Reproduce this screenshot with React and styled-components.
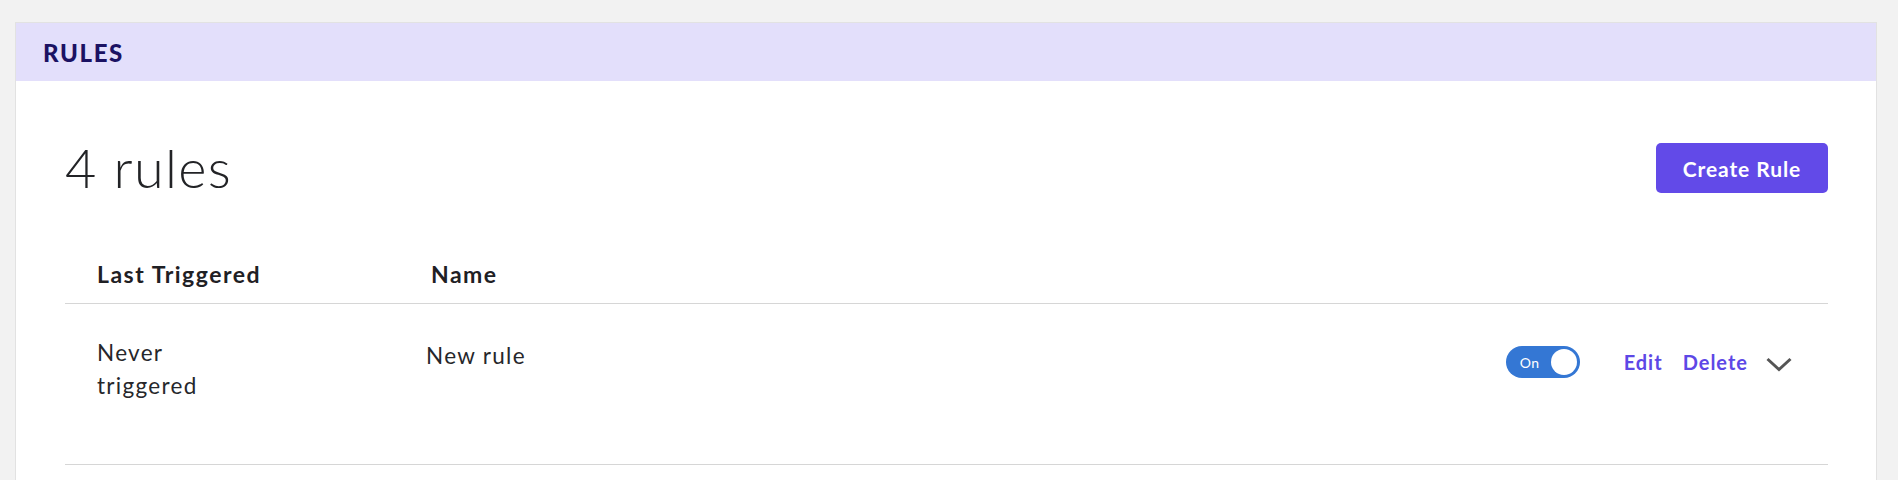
import React from 'react';
import styled, { createGlobalStyle } from 'styled-components';

const font = `'Lato', 'Open Sans', sans-serif`;

const GlobalStyle = createGlobalStyle`
  html, body {
    margin: 0;
    padding: 0;
    background: #f2f2f2;
    font-family: ${font};
    color: #222326;
  }
`;

const Page = styled.div`
  padding: 22px 21px 0 15px;
`;

const Card = styled.section`
  background: #fff;
  border: 1px solid #e2e2e2;
  border-bottom: none;
  min-height: 470px;
`;

const CardHeader = styled.header`
  height: 58px;
  display: flex;
  align-items: center;
  padding-left: 27px;
  background: #e3dffb;
`;

const CardTitle = styled.h2`
  margin: 0;
  font-size: 24px;
  font-weight: 900;
  letter-spacing: 1.6px;
  color: #1b1263;
`;

const CardBody = styled.div`
  padding: 0 48px 0 49px;
`;

const TitleRow = styled.div`
  margin-top: 62px;
  height: 50px;
  display: flex;
  align-items: center;
  justify-content: space-between;
`;

const Count = styled.h1`
  margin: 0;
  font-size: 54px;
  font-weight: 300;
  letter-spacing: 1.3px;
  line-height: 1;
  color: #222326;
`;

const PrimaryButton = styled.button`
  height: 50px;
  width: 172px;
  border: none;
  border-radius: 5px;
  background: #624ae8;
  color: #fff;
  font-family: ${font};
  font-size: 21px;
  font-weight: 700;
  letter-spacing: 0.9px;
  cursor: pointer;
`;

const Row = styled.div`
  display: grid;
  grid-template-columns: 334px 1fr auto;
  align-items: start;
  padding: ${p => (p.head ? '65px 36px 13px 32px' : '32px 36px 62px 32px')};
  border-bottom: 1px solid #d6d6d6;
`;

const HeadCell = styled.div`
  font-size: 23px;
  line-height: 32px;
  font-weight: 700;
  letter-spacing: 1.5px;
  color: #1f2024;
`;

const Cell = styled.div`
  font-size: 22.5px;
  line-height: 33px;
  letter-spacing: 1.3px;
  color: #26272b;
  margin: ${p => (p.offset ? '3px 0 0 -5px' : '0')};
  width: ${p => (p.narrow ? '120px' : 'auto')};
`;

const Actions = styled.div`
  display: flex;
  align-items: center;
  height: 32px;
  margin-top: 10px;
`;

const Toggle = styled.button`
  position: relative;
  width: 74px;
  height: 32px;
  border: none;
  border-radius: 16px;
  background: #3477d4;
  padding: 0 0 0 14px;
  display: flex;
  align-items: center;
  color: #fff;
  font-family: ${font};
  font-size: 14px;
  letter-spacing: 0.5px;
  cursor: pointer;
  margin-right: 44px;

  &::after {
    content: '';
    position: absolute;
    right: 3px;
    top: 3px;
    width: 26px;
    height: 26px;
    border-radius: 50%;
    background: #fff;
  }
`;

const TextLink = styled.a`
  font-size: 20px;
  font-weight: 700;
  letter-spacing: 1px;
  color: #5d48e6;
  text-decoration: none;
  margin-right: ${p => p.gap || 20}px;
  cursor: pointer;
`;

const Chevron = styled.svg`
  display: block;
  margin-top: 4px;
`;

export default function App() {
  return (
    <>
      <GlobalStyle />
      <Page>
        <Card>
          <CardHeader>
            <CardTitle>RULES</CardTitle>
          </CardHeader>
          <CardBody>
            <TitleRow>
              <Count>4 rules</Count>
              <PrimaryButton>Create Rule</PrimaryButton>
            </TitleRow>

            <Row head>
              <HeadCell>Last Triggered</HeadCell>
              <HeadCell>Name</HeadCell>
              <div />
            </Row>

            <Row>
              <Cell narrow>Never triggered</Cell>
              <Cell offset>New rule</Cell>
              <Actions>
                <Toggle>On</Toggle>
                <TextLink gap={20}>Edit</TextLink>
                <TextLink gap={18}>Delete</TextLink>
                <Chevron width="26" height="15" viewBox="0 0 26 15">
                  <polyline
                    points="1.5,2 13,12.5 24.5,2"
                    fill="none"
                    stroke="#555"
                    strokeWidth="3"
                  />
                </Chevron>
              </Actions>
            </Row>
          </CardBody>
        </Card>
      </Page>
    </>
  );
}
